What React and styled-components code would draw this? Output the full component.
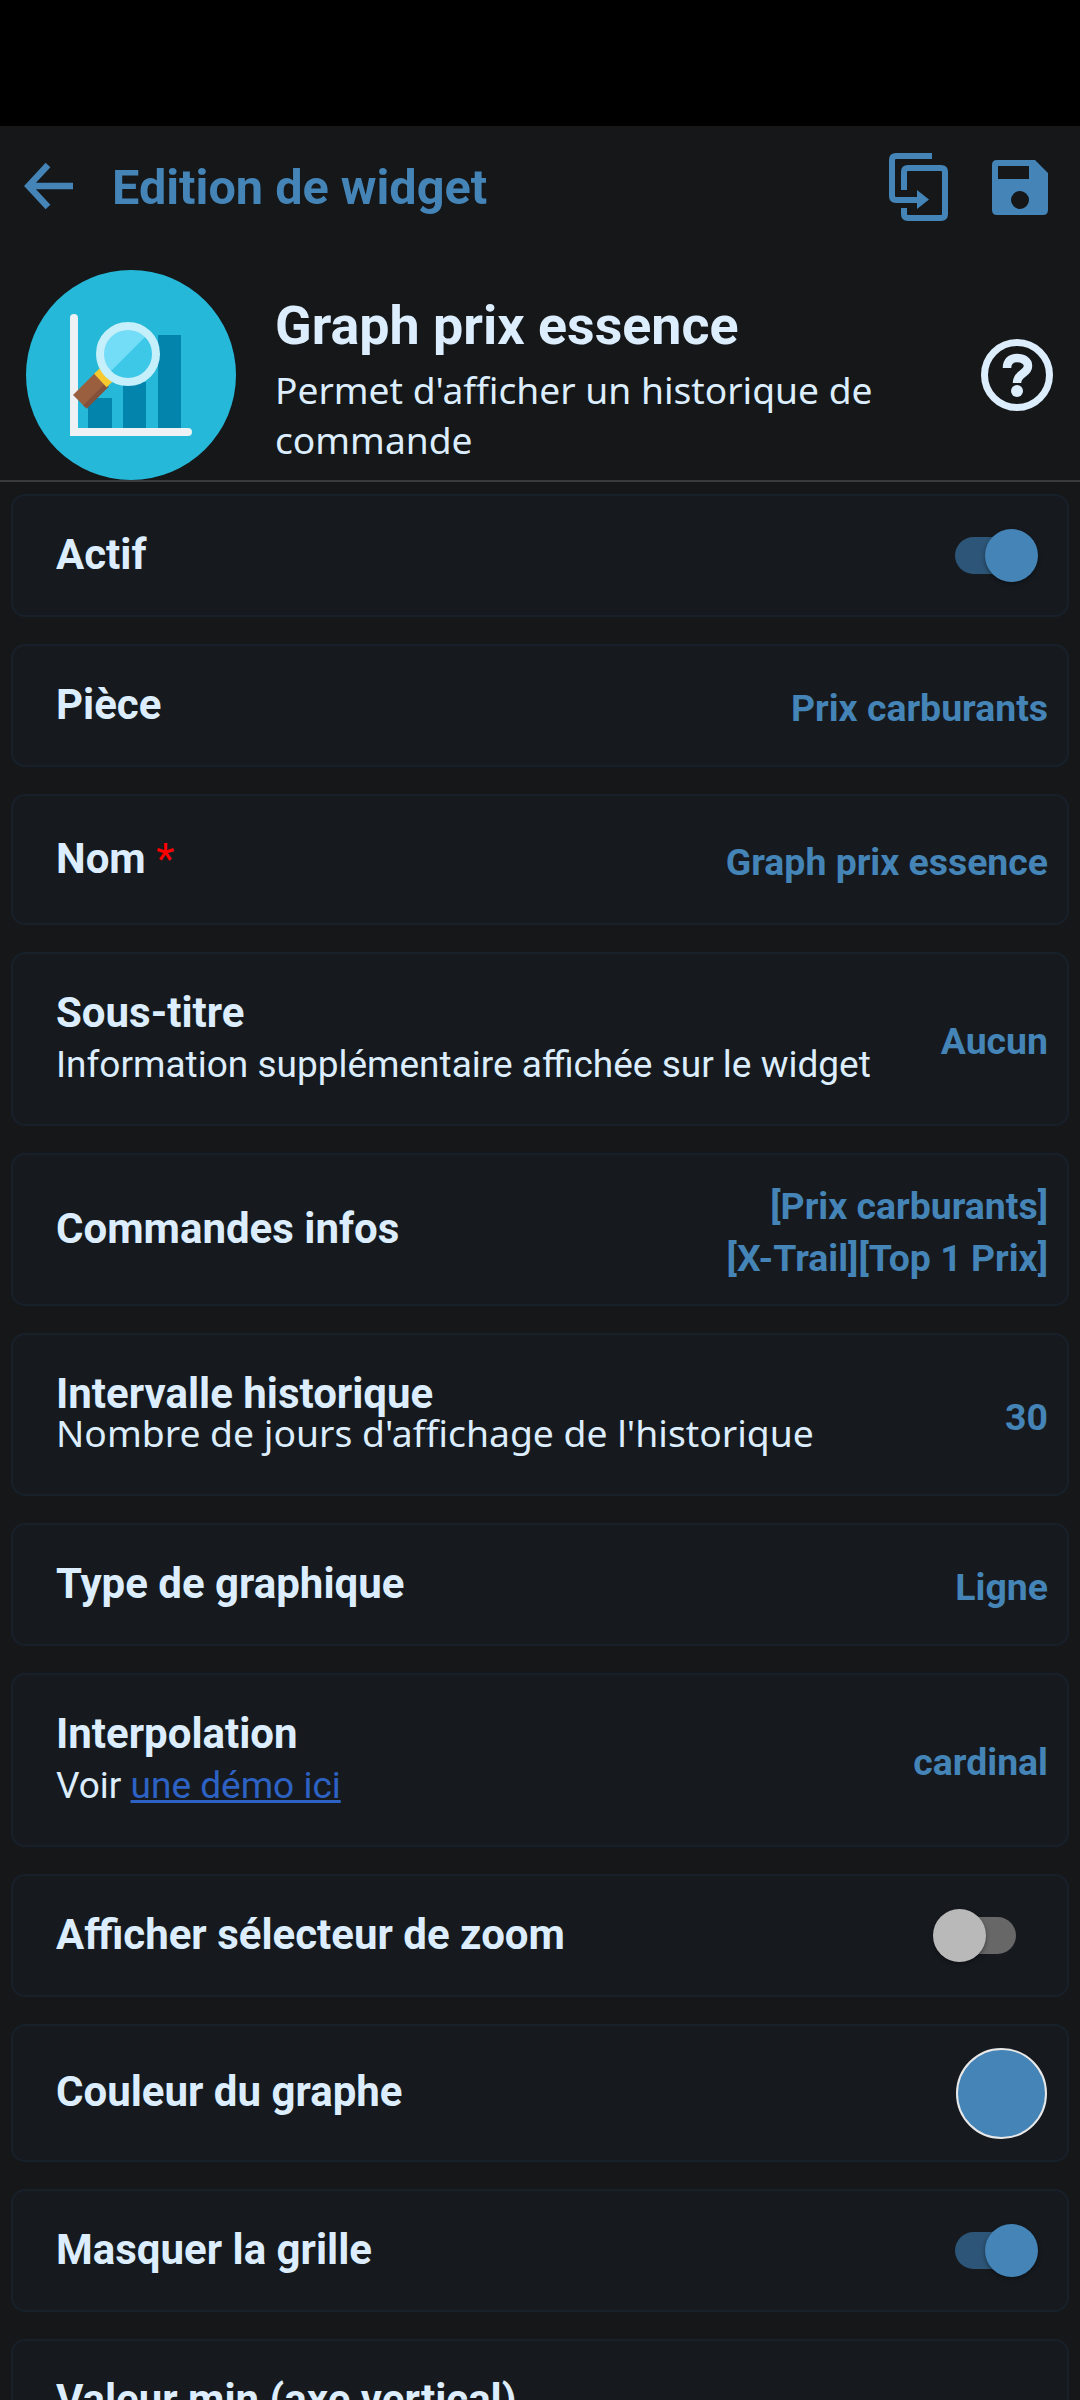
import React from "react";
import styled, { createGlobalStyle } from "styled-components";

const blue = "#4484b7";
const pale = "#dcedfd";

const GlobalStyle = createGlobalStyle`
  html, body {
    margin: 0;
    padding: 0;
    background: #151719;
    overflow: hidden;
  }
  * {
    box-sizing: border-box;
  }
`;

const Page = styled.div`
  width: 1080px;
  height: 2400px;
  overflow: hidden;
  background: #151719;
  font-family: Roboto, "Noto Sans", sans-serif;
`;

const StatusBar = styled.div`
  height: 126px;
  background: #000;
`;

const TopBar = styled.header`
  height: 122px;
  padding: 0 32px 0 24px;
  display: flex;
  align-items: center;
`;

const BackButton = styled.svg`
  width: 50px;
  height: 50px;
  flex: none;
`;

const PageTitle = styled.h1`
  margin: 0 0 0 38px;
  flex: 1;
  color: ${blue};
  font-size: 48.6px;
  font-weight: 700;
`;

const Actions = styled.div`
  display: flex;
  align-items: center;
  gap: 44px;
`;

const Summary = styled.section`
  height: 234px;
  padding: 22px 27px 0 26px;
  display: flex;
  align-items: flex-start;
  border-bottom: 2px solid #3a3b3d;
`;

const Logo = styled.svg`
  width: 210px;
  height: 210px;
  flex: none;
`;

const SummaryText = styled.div`
  flex: 1;
  margin-left: 39px;
  padding-top: 26px;
`;

const SummaryTitle = styled.h2`
  margin: 0 0 9px;
  color: ${pale};
  font-size: 53.8px;
  line-height: 60px;
  font-weight: 700;
`;

const SummaryDesc = styled.p`
  margin: 0;
  color: ${pale};
  font-family: "Noto Sans", sans-serif;
  font-size: 37.2px;
  line-height: 50px;
`;

const HelpIcon = styled.svg`
  width: 72px;
  height: 72px;
  flex: none;
  margin-top: 69px;
`;

const List = styled.div`
  padding: 12px 11px 0;
  display: flex;
  flex-direction: column;
  gap: 27px;
`;

const Card = styled.div`
  height: ${(p) => p.$h}px;
  flex: none;
  padding: 0 19px 0 43px;
  display: flex;
  align-items: center;
  justify-content: space-between;
  background: #161a1f;
  border: 2px solid #18202a;
  border-radius: 14px;
`;

const LabelBlock = styled.div`
  display: flex;
  flex-direction: column;
  min-width: 0;
`;

const Label = styled.div`
  padding-bottom: 2px;
  color: ${pale};
  font-size: 42px;
  line-height: 48px;
  font-weight: 700;
  white-space: nowrap;
`;

const Star = styled.span`
  color: #f00;
  font-weight: 400;
`;

const Hint = styled.div`
  color: ${pale};
  font-size: 37px;
  line-height: 51px;
  white-space: nowrap;
`;

const NotoHint = styled(Hint)`
  margin-bottom: 15px;
  font-family: "Noto Sans", sans-serif;
  font-size: 37.3px;
  line-height: 25px;
`;

const DemoLink = styled.a`
  color: #2d62c4;
  text-decoration: underline;
`;

const Value = styled.div`
  color: ${blue};
  font-size: 37.4px;
  line-height: 52px;
  font-weight: 700;
  text-align: right;
  padding-top: 4px;
`;

const SwitchTrack = styled.div`
  position: relative;
  width: 73px;
  height: 37px;
  margin-right: ${(p) => (p.$on ? 20 : 32)}px;
  border-radius: 19px;
  background: ${(p) => (p.$on ? "#2d5577" : "#676767")};
`;

const SwitchThumb = styled.div`
  position: absolute;
  top: -8px;
  ${(p) => (p.$on ? "right: -10px;" : "left: -10px;")}
  width: 53px;
  height: 53px;
  border-radius: 50%;
  background: ${(p) => (p.$on ? blue : "#b9b9b9")};
  box-shadow: 0 2px 4px rgba(0, 0, 0, 0.4);
`;

const Swatch = styled.div`
  width: 91px;
  height: 91px;
  margin-right: 1px;
  border-radius: 50%;
  background: #4484b7;
  border: 2px solid #e8e8e8;
`;

function Switch({ on }) {
  return (
    <SwitchTrack $on={on}>
      <SwitchThumb $on={on} />
    </SwitchTrack>
  );
}

function CopyIcon() {
  return (
    <svg width="59" height="68" viewBox="0 0 59 68" fill="none" stroke={blue} strokeWidth="6">
      <path d="M43 3H7Q3 3 3 7V43Q3 47 7 47H30" />
      <path d="M15 37V19Q15 15 19 15H52Q56 15 56 19V61Q56 65 52 65H19Q15 65 15 61V55" />
      <path d="M28 37L40 46.5L28 56Z" fill={blue} stroke="none" />
    </svg>
  );
}

function SaveIcon() {
  return (
    <svg width="56" height="55" viewBox="0 0 56 55">
      <path
        fill={blue}
        fillRule="evenodd"
        d="M5 0H43L56 13V50Q56 55 51 55H5Q0 55 0 50V5Q0 0 5 0ZM6 6V19H37V6ZM28 31A9 9 0 1 0 28 49A9 9 0 1 0 28 31Z"
      />
    </svg>
  );
}

function ChartLogo() {
  return (
    <Logo viewBox="0 0 210 210">
      <circle cx="105" cy="105" r="105" fill="#26b8d8" />
      <rect x="62" y="128" width="24" height="31" fill="#0284ad" />
      <rect x="97" y="112" width="23" height="47" fill="#0284ad" />
      <rect x="132" y="65" width="23" height="94" fill="#0284ad" />
      <path d="M48 48V162H162" fill="none" stroke="#eef2f4" strokeWidth="8" strokeLinecap="round" />
      <path d="M53 131L75 109" stroke="#9a5f3f" strokeWidth="17" />
      <path d="M59 137L81 115" stroke="#84503a" strokeWidth="5" />
      <path d="M71 101L83.5 114.5" stroke="#f6c92f" strokeWidth="8" />
      <circle cx="102" cy="84" r="28" fill="#3ec8e8" />
      <path d="M82 104A28 28 0 0 1 122 64Z" fill="#73dcf6" />
      <circle cx="102" cy="84" r="28" fill="none" stroke="#c5f0fb" strokeWidth="8" />
    </Logo>
  );
}

export default function App() {
  return (
    <Page>
      <GlobalStyle />
      <StatusBar />
      <TopBar>
        <BackButton viewBox="0 0 50 50" fill="none" stroke={blue} strokeWidth="6.5">
          <path d="M24 3L4.5 24L24 45M4.5 24H49" />
        </BackButton>
        <PageTitle>Edition de widget</PageTitle>
        <Actions>
          <CopyIcon />
          <SaveIcon />
        </Actions>
      </TopBar>
      <Summary>
        <ChartLogo />
        <SummaryText>
          <SummaryTitle>Graph prix essence</SummaryTitle>
          <SummaryDesc>
            Permet d'afficher un historique de
            <br />
            commande
          </SummaryDesc>
        </SummaryText>
        <HelpIcon viewBox="0 0 72 72" fill="none" stroke={pale} strokeWidth="7">
          <circle cx="36" cy="36" r="32.5" />
          <path d="M26 29C26 22 30 19 36 19C42 19 47 22 47 27C47 35 36 34 36 44" strokeWidth="8.5" />
          <circle cx="36" cy="52" r="6" fill={pale} stroke="none" />
        </HelpIcon>
      </Summary>
      <List>
        <Card $h={123}>
          <Label>Actif</Label>
          <Switch on />
        </Card>
        <Card $h={123}>
          <Label>Pièce</Label>
          <Value>Prix carburants</Value>
        </Card>
        <Card $h={131}>
          <Label>
            Nom <Star>*</Star>
          </Label>
          <Value>Graph prix essence</Value>
        </Card>
        <Card $h={174}>
          <LabelBlock>
            <Label>Sous-titre</Label>
            <Hint>Information supplémentaire affichée sur le widget</Hint>
          </LabelBlock>
          <Value>Aucun</Value>
        </Card>
        <Card $h={153}>
          <Label>Commandes infos</Label>
          <Value>
            [Prix carburants]
            <br />
            [X-Trail][Top 1 Prix]
          </Value>
        </Card>
        <Card $h={163}>
          <LabelBlock>
            <Label>Intervalle historique</Label>
            <NotoHint>Nombre de jours d'affichage de l'historique</NotoHint>
          </LabelBlock>
          <Value>30</Value>
        </Card>
        <Card $h={123}>
          <Label>Type de graphique</Label>
          <Value>Ligne</Value>
        </Card>
        <Card $h={174}>
          <LabelBlock>
            <Label>Interpolation</Label>
            <Hint>
              Voir <DemoLink>une démo ici</DemoLink>
            </Hint>
          </LabelBlock>
          <Value>cardinal</Value>
        </Card>
        <Card $h={123}>
          <Label>Afficher sélecteur de zoom</Label>
          <Switch />
        </Card>
        <Card $h={138}>
          <Label>Couleur du graphe</Label>
          <Swatch />
        </Card>
        <Card $h={123}>
          <Label>Masquer la grille</Label>
          <Switch on />
        </Card>
        <Card $h={124}>
          <Label>Valeur min (axe vertical)</Label>
        </Card>
      </List>
    </Page>
  );
}
